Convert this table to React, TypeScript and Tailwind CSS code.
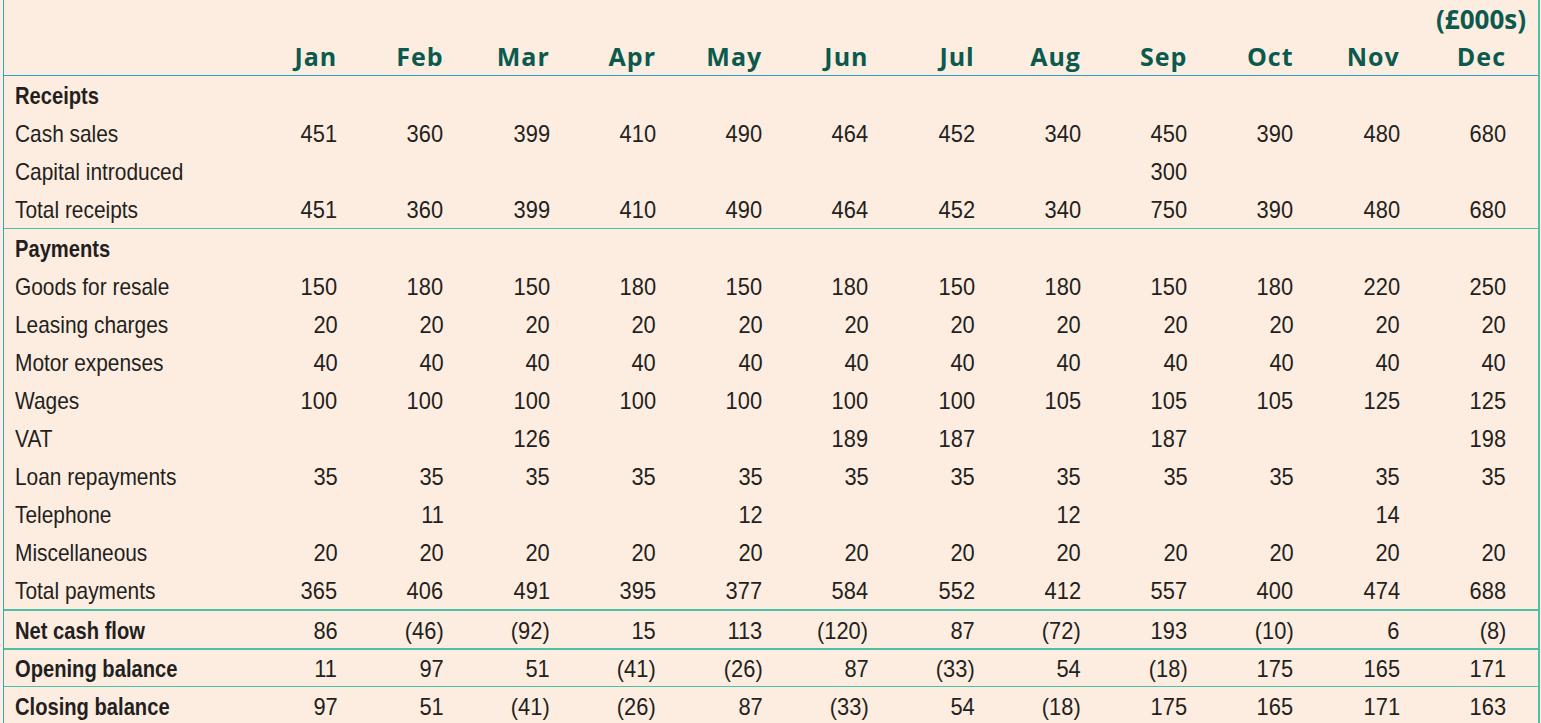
import React from "react";

const months = ["Jan","Feb","Mar","Apr","May","Jun","Jul","Aug","Sep","Oct","Nov","Dec"];

type Row = { label: string; vals: string[]; bold?: boolean };

const receipts: Row[] = [
  { label: "Receipts", vals: [], bold: true },
  { label: "Cash sales", vals: ["451","360","399","410","490","464","452","340","450","390","480","680"] },
  { label: "Capital introduced", vals: ["","","","","","","","","300","","",""] },
  { label: "Total receipts", vals: ["451","360","399","410","490","464","452","340","750","390","480","680"] },
];

const payments: Row[] = [
  { label: "Payments", vals: [], bold: true },
  { label: "Goods for resale", vals: ["150","180","150","180","150","180","150","180","150","180","220","250"] },
  { label: "Leasing charges", vals: ["20","20","20","20","20","20","20","20","20","20","20","20"] },
  { label: "Motor expenses", vals: ["40","40","40","40","40","40","40","40","40","40","40","40"] },
  { label: "Wages", vals: ["100","100","100","100","100","100","100","105","105","105","125","125"] },
  { label: "VAT", vals: ["","","126","","","189","187","","187","","","198"] },
  { label: "Loan repayments", vals: ["35","35","35","35","35","35","35","35","35","35","35","35"] },
  { label: "Telephone", vals: ["","11","","","12","","","12","","","14",""] },
  { label: "Miscellaneous", vals: ["20","20","20","20","20","20","20","20","20","20","20","20"] },
  { label: "Total payments", vals: ["365","406","491","395","377","584","552","412","557","400","474","688"] },
];

const net: Row = { label: "Net cash flow", vals: ["86","(46)","(92)","15","113","(120)","87","(72)","193","(10)","6","(8)"], bold: true };
const opening: Row = { label: "Opening balance", vals: ["11","97","51","(41)","(26)","87","(33)","54","(18)","175","165","171"], bold: true };
const closing: Row = { label: "Closing balance", vals: ["97","51","(41)","(26)","87","(33)","54","(18)","175","165","171","163"], bold: true };

const bodyFont = { fontFamily: '"Liberation Sans", Arial, sans-serif' };
const headFont = { fontFamily: '"Open Sans", "Liberation Sans", sans-serif' };

function DataRow({ r, h = "h-[38px]" }: { r: Row; h?: string }) {
  return (
    <div className={`grid grid-cols-[227px_repeat(12,106.25px)] items-center ${h} text-[24px] leading-none text-[#231f20] pt-[2px]`}>
      <div className="pl-[11px] whitespace-nowrap">
        <span className={`inline-block origin-left ${r.bold ? "font-bold scale-x-[0.84]" : "scale-x-[0.87]"}`}>{r.label}</span>
      </div>
      {months.map((m, i) => (
        <div key={m} className="text-right whitespace-nowrap">
          <span className="inline-block origin-right scale-x-[0.91]">{r.vals[i] ?? ""}</span>
        </div>
      ))}
    </div>
  );
}

export default function App() {
  return (
    <div className="w-[1541px] h-[723px] overflow-hidden bg-[#fdeee1]" style={bodyFont}>
      <div className="ml-[3px] w-[1537px] h-[723px] border-l border-l-[#35a7b5] border-r-2 border-r-[#4cc0a8] bg-[#fdede0]">
        <div className="h-[38px] flex items-center justify-end pr-[12px] text-[26px] font-bold text-[#0b5a4d]" style={headFont}>
          (£000s)
        </div>
        <div className="grid grid-cols-[227px_repeat(12,106.25px)] items-center h-[38px] text-[25px] font-bold tracking-[1px] text-[#0b5a4d] border-b border-b-[#2a9fc2]" style={headFont}>
          <div />
          {months.map((m) => (
            <div key={m} className="text-right">{m}</div>
          ))}
        </div>
        <div className="border-b border-b-[#4cbfa6]">
          {receipts.map((r) => <DataRow key={r.label} r={r} />)}
        </div>
        <div className="border-b-2 border-b-[#4cbfa6]">
          {payments.map((r) => <DataRow key={r.label} r={r} />)}
        </div>
        <div className="border-b-2 border-b-[#4cbfa6]">
          <DataRow r={net} h="h-[37px]" />
        </div>
        <div className="border-b border-b-[#4cbfa6]">
          <DataRow r={opening} h="h-[36px]" />
        </div>
        <DataRow r={closing} />
      </div>
    </div>
  );
}
